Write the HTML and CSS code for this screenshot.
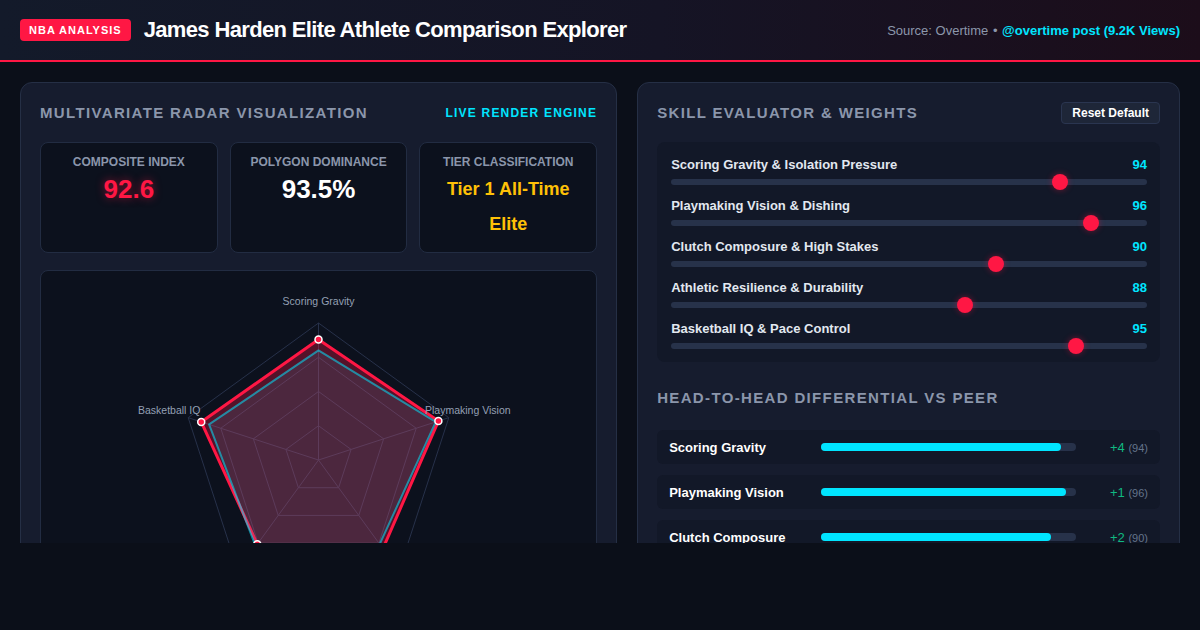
FILE: index.html
```html
<!DOCTYPE html>
<html>
<head>
	<meta charset="UTF-8">
	<title>James Harden Elite Athlete Comparison Explorer</title>
	<link rel="stylesheet" href="styles.css">
</head>
<body>
	<header class="topbar">
		<div class="brand">
			<span class="badge">NBA ANALYSIS</span>
			<h1 class="title">James Harden Elite Athlete Comparison Explorer</h1>
		</div>
		<div class="source">
			Source: Overtime <span class="sep">&bull;</span> <a class="source-link" href="#">@overtime post (9.2K Views)</a>
		</div>
	</header>

	<main class="layout">
		<!-- left: radar -->
		<section class="panel">
			<div class="panel-head">
				<h2 class="panel-title">Multivariate Radar Visualization</h2>
				<span class="live">Live Render Engine</span>
			</div>

			<div class="metrics">
				<div class="metric">
					<div class="metric-label">Composite Index</div>
					<div class="metric-value red">92.6</div>
				</div>
				<div class="metric">
					<div class="metric-label">Polygon Dominance</div>
					<div class="metric-value">93.5%</div>
				</div>
				<div class="metric">
					<div class="metric-label">Tier Classification</div>
					<div class="metric-value tier">Tier 1 All-Time Elite</div>
				</div>
			</div>

			<div class="radar-box">
				<svg class="radar" viewBox="0 0 555 300" width="555" height="300">
					<g class="grid">
						<polygon points="277.5,52 407.8,146.67 358.03,299.83 196.97,299.83 147.2,146.67" />
						<polygon points="277.5,86.25 375.22,157.25 337.9,272.12 217.1,272.12 179.78,157.25" />
						<polygon points="277.5,120.5 342.65,167.83 317.76,244.42 237.24,244.42 212.35,167.83" />
						<polygon points="277.5,154.75 310.07,178.42 297.63,216.71 257.37,216.71 244.93,178.42" />
						<line x1="277.5" y1="189" x2="277.5" y2="52" />
						<line x1="277.5" y1="189" x2="407.8" y2="146.67" />
						<line x1="277.5" y1="189" x2="358.03" y2="299.83" />
						<line x1="277.5" y1="189" x2="196.97" y2="299.83" />
						<line x1="277.5" y1="189" x2="147.2" y2="146.67" />
					</g>
					<polygon class="shape-harden" points="277.5,68.44 397.38,150.05 341.92,277.67 216.3,273.23 160.23,150.9" />
					<polygon class="shape-peer" points="277.5,79.4 394.77,150.9 338.7,273.23 214.69,275.45 168.05,153.44" />
					<g class="points">
						<circle cx="277.5" cy="68.44" r="3.5" />
						<circle cx="397.38" cy="150.05" r="3.5" />
						<circle cx="341.92" cy="277.67" r="3.5" />
						<circle cx="216.3" cy="273.23" r="3.5" />
						<circle cx="160.23" cy="150.9" r="3.5" />
					</g>
					<g class="axis-label">
						<text x="277.5" y="31">Scoring Gravity</text>
						<text x="426.8" y="140">Playmaking Vision</text>
						<text x="128.2" y="140">Basketball IQ</text>
					</g>
				</svg>
			</div>
		</section>

		<!-- right: sliders + differential -->
		<section class="panel">
			<div class="panel-head">
				<h2 class="panel-title">Skill Evaluator &amp; Weights</h2>
				<button class="reset">Reset Default</button>
			</div>

			<div class="sliders">
				<div class="slider-row">
					<div class="slider-head"><span>Scoring Gravity &amp; Isolation Pressure</span><span class="slider-val">94</span></div>
					<input type="range" min="70" max="99" value="94">
				</div>
				<div class="slider-row">
					<div class="slider-head"><span>Playmaking Vision &amp; Dishing</span><span class="slider-val">96</span></div>
					<input type="range" min="70" max="99" value="96">
				</div>
				<div class="slider-row">
					<div class="slider-head"><span>Clutch Composure &amp; High Stakes</span><span class="slider-val">90</span></div>
					<input type="range" min="70" max="99" value="90">
				</div>
				<div class="slider-row">
					<div class="slider-head"><span>Athletic Resilience &amp; Durability</span><span class="slider-val">88</span></div>
					<input type="range" min="70" max="99" value="88">
				</div>
				<div class="slider-row">
					<div class="slider-head"><span>Basketball IQ &amp; Pace Control</span><span class="slider-val">95</span></div>
					<input type="range" min="70" max="99" value="95">
				</div>
			</div>

			<h2 class="panel-title diff-title">Head-to-Head Differential vs Peer</h2>

			<div class="diff-list">
				<div class="diff-row">
					<span class="diff-name">Scoring Gravity</span>
					<div class="bar"><div class="bar-fill" style="width: 94%"></div></div>
					<span class="diff-num"><b>+4</b> <small>(94)</small></span>
				</div>
				<div class="diff-row">
					<span class="diff-name">Playmaking Vision</span>
					<div class="bar"><div class="bar-fill" style="width: 96%"></div></div>
					<span class="diff-num"><b>+1</b> <small>(96)</small></span>
				</div>
				<div class="diff-row">
					<span class="diff-name">Clutch Composure</span>
					<div class="bar"><div class="bar-fill" style="width: 90%"></div></div>
					<span class="diff-num"><b>+2</b> <small>(90)</small></span>
				</div>
			</div>
		</section>
	</main>
</body>
</html>
```

FILE: styles.css
```css
* {
	box-sizing: border-box;
}

body {
	margin: 0;
	background: #0b0f19;
	color: #e2e8f0;
	font-family: "Liberation Sans", Arial, sans-serif;
}

h1,
h2 {
	margin: 0;
}

/* top bar */
.topbar {
	height: 62px;
	padding: 0 20px;
	display: flex;
	align-items: center;
	justify-content: space-between;
	border-bottom: 2px solid #ff1744;
	background: linear-gradient(90deg, #131a2a 0%, #151425 55%, #1c0d1a 100%);
}

.brand {
	display: flex;
	align-items: center;
	gap: 13px;
}

.badge {
	display: inline-block;
	height: 22px;
	line-height: 22px;
	padding: 0 9px;
	border-radius: 4px;
	background: #ff1744;
	color: #fff;
	font-size: 11px;
	font-weight: bold;
	letter-spacing: 1px;
}

.title {
	font-size: 22px;
	font-weight: bold;
	letter-spacing: -0.65px;
	color: #fff;
}

.source {
	font-size: 13px;
	color: #8c97ab;
}

.sep {
	margin: 0 1px;
}

.source-link {
	color: #00e5ff;
	font-weight: bold;
	text-decoration: none;
}

/* main grid */
.layout {
	height: 481px;
	overflow: hidden;
	padding: 20px;
	display: grid;
	grid-template-columns: 1.1fr 1fr;
	gap: 20px;
	align-items: start;
}

.panel {
	background: #161c2e;
	border: 1px solid #252f45;
	border-radius: 12px;
	padding: 19px;
}

.panel-head {
	display: flex;
	align-items: center;
	justify-content: space-between;
	height: 22px;
	margin-bottom: 18px;
}

.panel-title {
	font-size: 15px;
	line-height: 22px;
	font-weight: bold;
	letter-spacing: 1.35px;
	text-transform: uppercase;
	color: #8b96ab;
}

.live {
	font-size: 12px;
	font-weight: bold;
	letter-spacing: 1.2px;
	text-transform: uppercase;
	color: #00e5ff;
}

/* metric cards */
.metrics {
	display: grid;
	grid-template-columns: repeat(3, 1fr);
	gap: 12px;
	margin-bottom: 17px;
}

.metric {
	background: #0c111d;
	border: 1px solid #222c42;
	border-radius: 8px;
	padding: 12px 10px 10px;
	text-align: center;
}

.metric-label {
	font-size: 12px;
	line-height: 14px;
	font-weight: bold;
	text-transform: uppercase;
	color: #8b96ab;
}

.metric-value {
	margin-top: 3px;
	font-size: 26px;
	line-height: 35px;
	font-weight: bold;
	color: #fff;
}

.metric-value.red {
	color: #ff1744;
	text-shadow: 0 0 8px rgba(255, 23, 68, 0.5);
}

.metric-value.tier {
	font-size: 18px;
	color: #ffc107;
}

/* radar */
.radar-box {
	background: #0c111d;
	border: 1px solid #222c42;
	border-radius: 8px;
	height: 400px;
}

.radar {
	display: block;
}

.grid polygon,
.grid line {
	fill: none;
	stroke: #27314a;
	stroke-width: 1;
}

.shape-harden {
	fill: rgba(255, 23, 68, 0.3);
	stroke: #ff1744;
	stroke-width: 3;
	stroke-linejoin: round;
}

.shape-peer {
	fill: rgba(0, 229, 255, 0.1);
	stroke: rgba(0, 229, 255, 0.55);
	stroke-width: 2;
	stroke-linejoin: round;
}

.points circle {
	fill: #ff1744;
	stroke: #fff;
	stroke-width: 1.5;
}

.axis-label text {
	font-size: 10.5px;
	fill: #94a0b4;
	text-anchor: middle;
	dominant-baseline: middle;
}

/* sliders */
.reset {
	height: 22px;
	padding: 0 10px;
	border: 1px solid #2a3550;
	border-radius: 4px;
	background: #1e2638;
	color: #fff;
	font-family: inherit;
	font-size: 12px;
	font-weight: bold;
}

.sliders {
	background: #121828;
	border-radius: 8px;
	padding: 15px 13px 8px 14px;
}

.slider-row {
	margin-bottom: 8px;
}

.slider-row:last-child {
	margin-bottom: 0;
}

.slider-head {
	display: flex;
	justify-content: space-between;
	font-size: 13px;
	line-height: 16px;
	font-weight: bold;
	color: #e2e8f0;
}

.slider-val {
	color: #00e5ff;
}

.slider-row input {
	-webkit-appearance: none;
	appearance: none;
	display: block;
	width: 100%;
	height: 16px;
	margin: 1px 0 0;
	background: transparent;
}

.slider-row input::-webkit-slider-runnable-track {
	height: 6px;
	border-radius: 3px;
	background: #27324a;
}

.slider-row input::-webkit-slider-thumb {
	-webkit-appearance: none;
	width: 16px;
	height: 16px;
	margin-top: -5px;
	border-radius: 50%;
	background: #ff1744;
	box-shadow: 0 0 6px rgba(255, 23, 68, 0.4);
}

/* differential */
.diff-title {
	margin-top: 25px;
	margin-bottom: 21px;
}

.diff-list {
	display: flex;
	flex-direction: column;
	gap: 11px;
}

.diff-row {
	height: 34px;
	padding: 0 12px;
	display: grid;
	grid-template-columns: 140px 1fr 60px;
	gap: 12px;
	align-items: center;
	background: #121828;
	border-radius: 6px;
}

.diff-name {
	font-size: 13px;
	font-weight: bold;
	color: #fff;
}

.bar {
	height: 8px;
	border-radius: 4px;
	background: #27324a;
}

.bar-fill {
	height: 100%;
	border-radius: 4px;
	background: #00e5ff;
}

.diff-num {
	text-align: right;
	font-size: 13px;
}

.diff-num b {
	font-weight: normal;
	color: #10b981;
}

.diff-num small {
	font-size: 11px;
	color: #64748b;
}
```
